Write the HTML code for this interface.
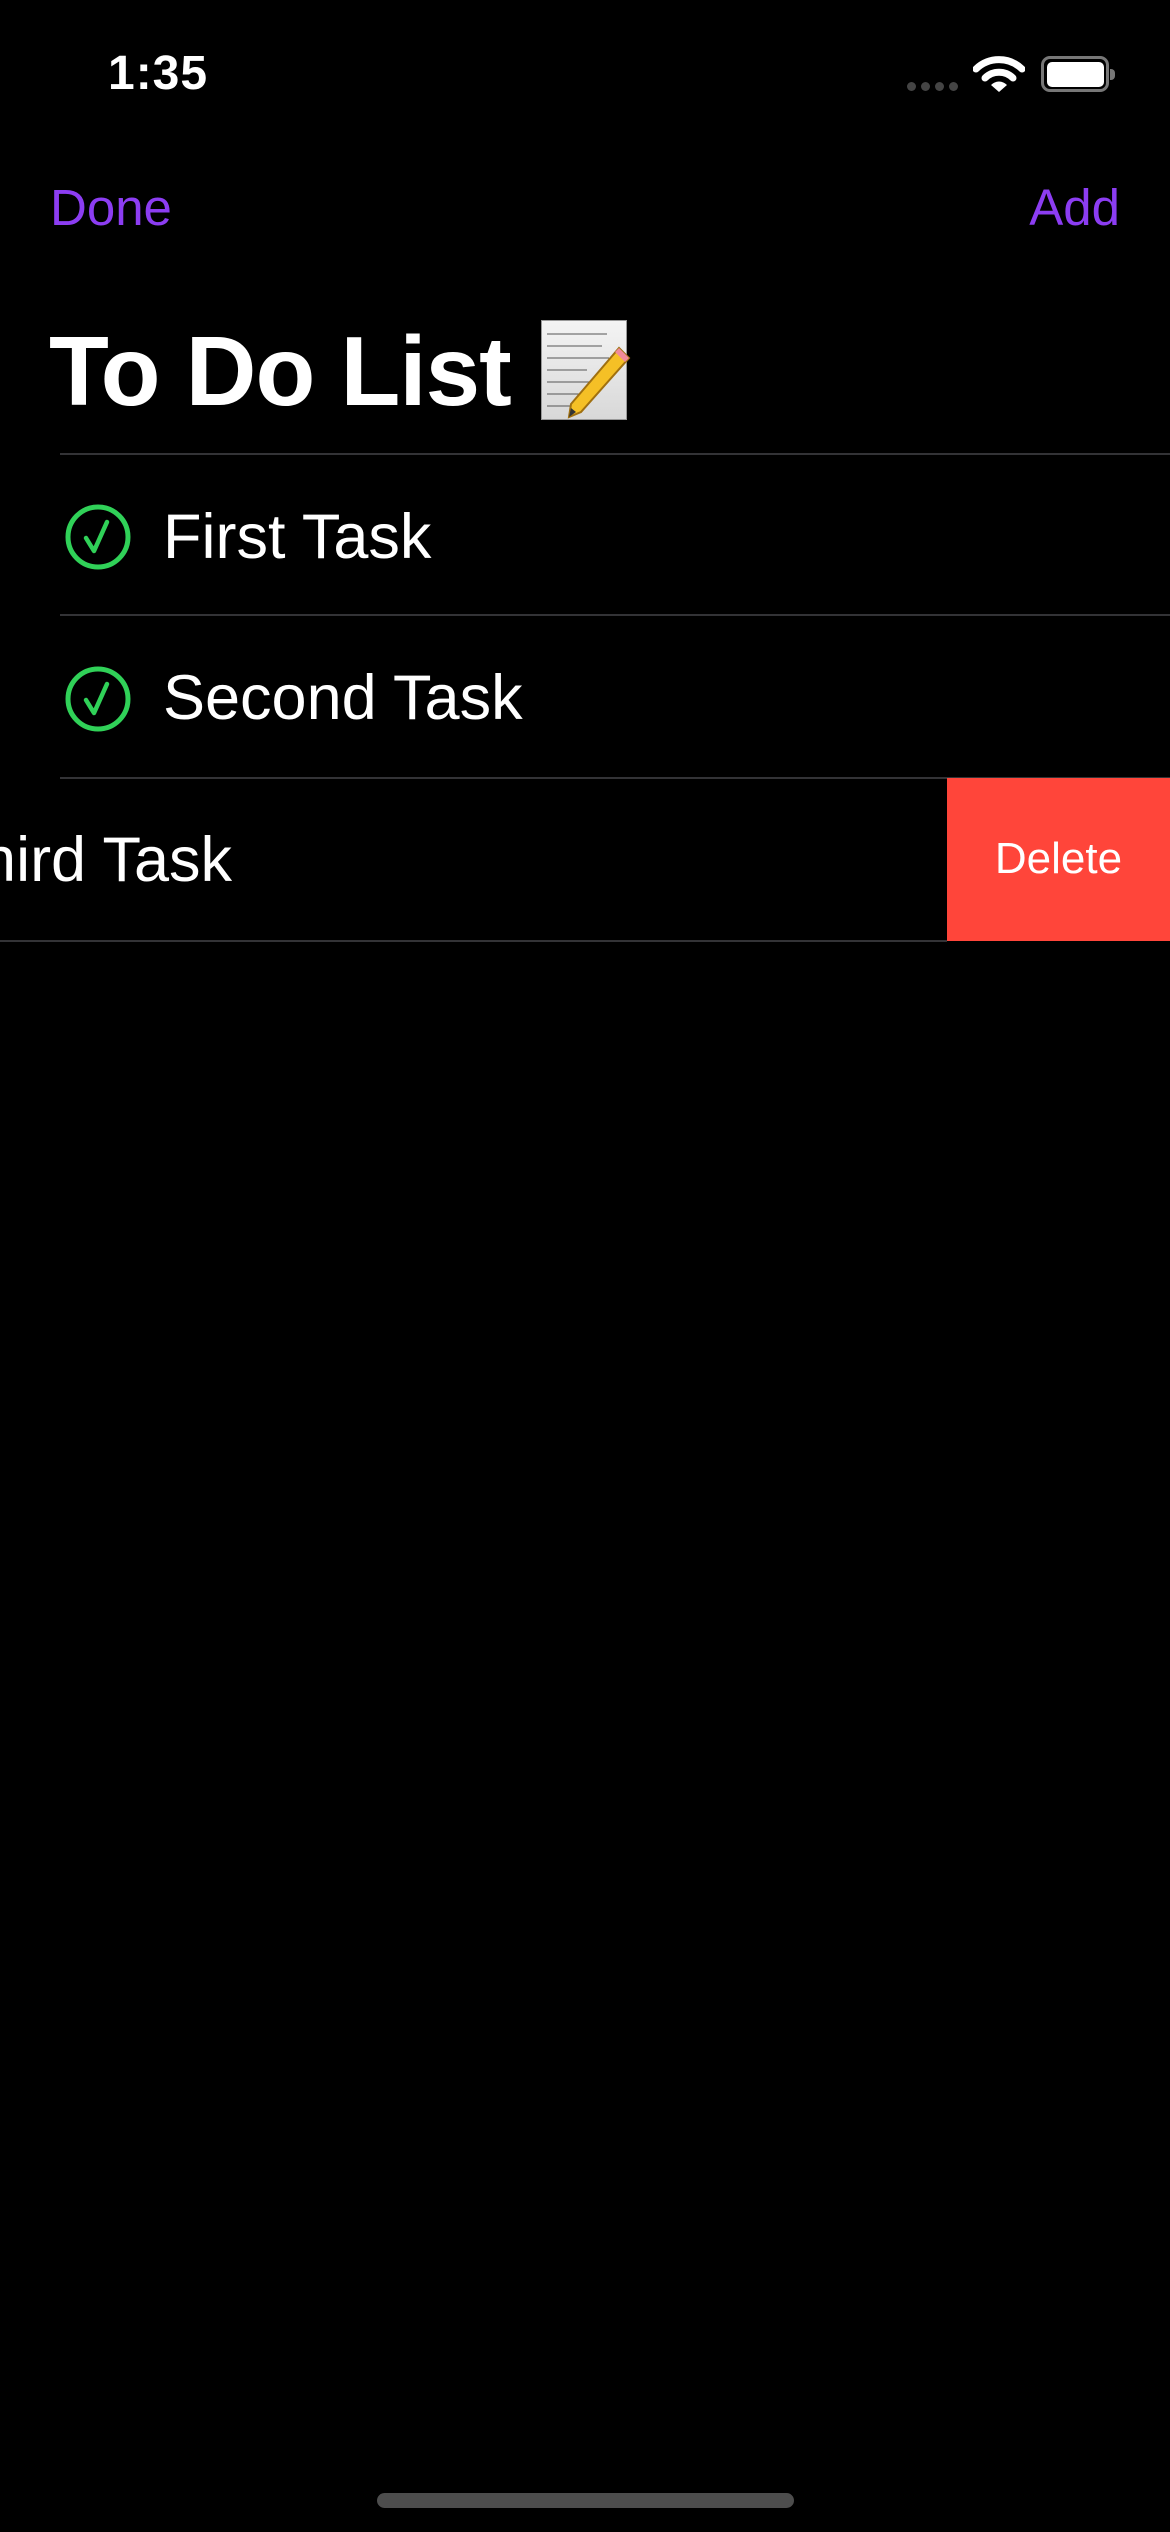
<!DOCTYPE html>
<html><head><meta charset="utf-8"><style>
html,body{margin:0;padding:0;background:#000;}
body{width:1170px;height:2532px;position:relative;overflow:hidden;font-family:"Liberation Sans",sans-serif;color:#fff;}
.a{position:absolute;white-space:nowrap;}
.sep{position:absolute;left:60px;right:0;height:2px;background:#333336;}
</style></head><body>
<div class="a" style="left:108px;top:46px;font-size:48px;font-weight:bold;line-height:56px;letter-spacing:1px">1:35</div>
<div class="a" style="left:907px;top:82px;width:9px;height:9px;border-radius:5px;background:#444"></div>
<div class="a" style="left:921px;top:82px;width:9px;height:9px;border-radius:5px;background:#444"></div>
<div class="a" style="left:935px;top:82px;width:9px;height:9px;border-radius:5px;background:#444"></div>
<div class="a" style="left:949px;top:82px;width:9px;height:9px;border-radius:5px;background:#444"></div>
<svg class="a" style="left:973px;top:54px" width="52" height="40" viewBox="0 0 52 40">
<path d="M3 15 A33 33 0 0 1 49 15" stroke="#fff" stroke-width="7" fill="none" stroke-linecap="round"/>
<path d="M12 24 A20 20 0 0 1 40 24" stroke="#fff" stroke-width="7" fill="none" stroke-linecap="round"/>
<path d="M18 31 L26 38 L34 31 A11 11 0 0 0 18 31Z" fill="#fff"/>
</svg>
<div class="a" style="left:1041px;top:56px;width:62px;height:30px;border:3px solid #777;border-radius:9px"></div>
<div class="a" style="left:1047px;top:62px;width:57px;height:25px;background:#fff;border-radius:5px"></div>
<div class="a" style="left:1110px;top:69px;width:5px;height:11px;background:#777;border-radius:0 4px 4px 0"></div>

<div class="a" style="left:50px;top:178px;font-size:51px;line-height:60px;color:#8c3df2">Done</div>
<div class="a" style="right:50px;top:178px;font-size:51px;line-height:60px;color:#8c3df2">Add</div>

<div class="a" style="left:49px;top:312px;font-size:98px;font-weight:bold;line-height:118px;letter-spacing:-1px">To Do List</div>
<div class="a" style="left:541px;top:320px;width:86px;height:100px;background:linear-gradient(#f4f4f4,#d8d8d8);border:1px solid #999;box-sizing:border-box"></div>
<svg class="a" style="left:541px;top:320px" width="90" height="100" viewBox="0 0 90 100">
<g stroke="#555" stroke-width="1" fill="none"><path d="M6 14h60M6 26h55M6 38h62M6 50h40M6 62h45M6 74h35M6 86h25"/></g>
<path d="M78 28 L88 38 L40 92 L28 97 L30 84 Z" fill="#f5c026" stroke="#a07010" stroke-width="2"/>
<path d="M78 28 L88 38 L84 42 L74 32Z" fill="#f08a9a"/>
<path d="M28 97 L30 88 L35 92Z" fill="#333"/>
</svg>

<div class="sep" style="top:453px"></div>
<svg class="a" style="left:64px;top:503px" width="68" height="68" viewBox="0 0 68 68"><circle cx="34" cy="34" r="30" stroke="#30d158" stroke-width="5" fill="none"/><path d="M22 35 L30 48 L43 19" stroke="#30d158" stroke-width="4.5" fill="none" stroke-linecap="round" stroke-linejoin="round"/></svg>
<div class="a" style="left:163px;top:497px;font-size:63px;line-height:80px">First Task</div>

<div class="sep" style="top:614px"></div>
<svg class="a" style="left:64px;top:665px" width="68" height="68" viewBox="0 0 68 68"><circle cx="34" cy="34" r="30" stroke="#30d158" stroke-width="5" fill="none"/><path d="M22 35 L30 48 L43 19" stroke="#30d158" stroke-width="4.5" fill="none" stroke-linecap="round" stroke-linejoin="round"/></svg>
<div class="a" style="left:163px;top:658px;font-size:63px;line-height:80px">Second Task</div>

<div class="sep" style="top:777px"></div>
<div class="a" style="right:938px;top:820px;font-size:63px;line-height:80px">Third Task</div>
<div class="a" style="left:947px;top:778px;width:223px;height:163px;background:#ff453a"></div>
<div class="a" style="left:947px;top:829px;width:223px;text-align:center;font-size:44px;line-height:60px">Delete</div>
<div class="a" style="left:0;width:947px;top:940px;height:2px;background:#333336"></div>

<div class="a" style="left:377px;top:2493px;width:417px;height:15px;border-radius:8px;background:#4d4d4d"></div>
</body></html>
